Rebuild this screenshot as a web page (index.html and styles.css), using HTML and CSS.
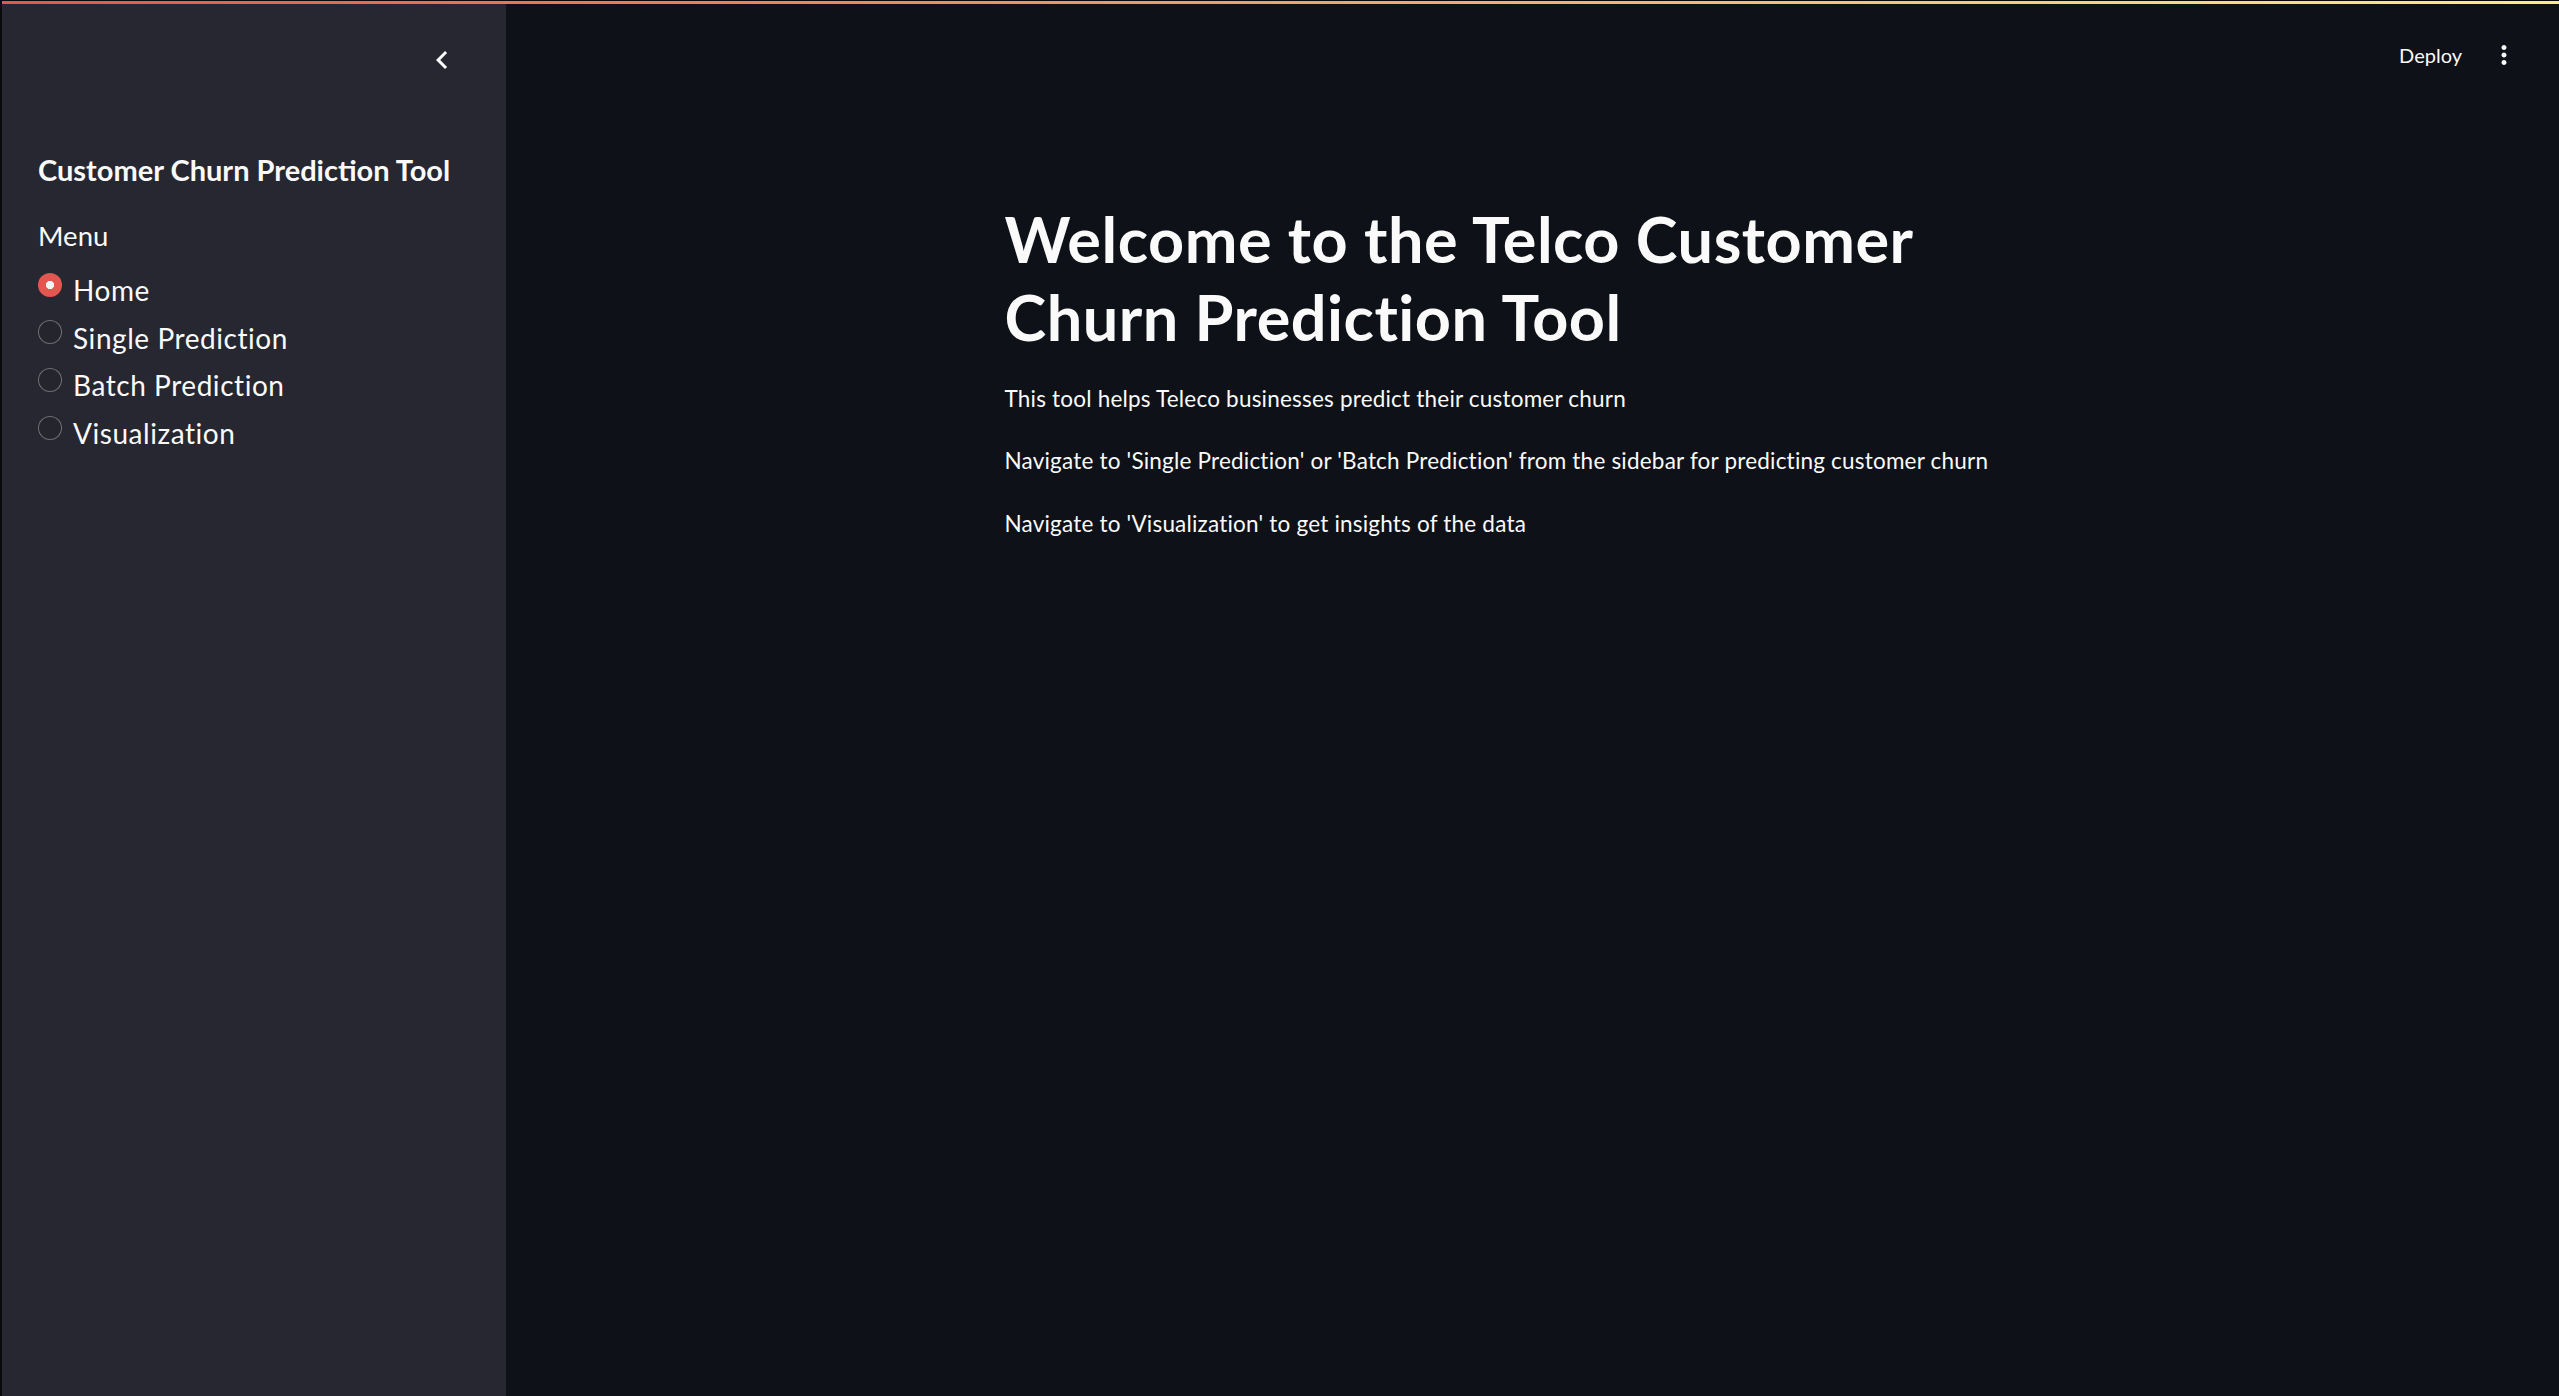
FILE: index.html
```html
<!DOCTYPE html>
<html lang="en">
<head>
<meta charset="utf-8">
<title>Customer Churn Prediction Tool</title>
<link rel="stylesheet" href="styles.css">
</head>
<body>
  <div class="decoration"></div>
  <div class="app">
    <aside class="sidebar">
      <div class="sb-top">
        <svg class="chevron" viewBox="0 0 24 24" width="36" height="36"><path d="M15.41 7.41L14 6l-6 6 6 6 1.41-1.41L10.83 12z" fill="#fafafa"/></svg>
      </div>
      <h2 class="sb-title">Customer Churn Prediction Tool</h2>
      <div class="menu-label">Menu</div>
      <div class="radio-group">
        <div class="radio-row"><span class="radio radio-on"></span><span class="radio-text">Home</span></div>
        <div class="radio-row"><span class="radio"></span><span class="radio-text">Single Prediction</span></div>
        <div class="radio-row"><span class="radio"></span><span class="radio-text">Batch Prediction</span></div>
        <div class="radio-row"><span class="radio"></span><span class="radio-text">Visualization</span></div>
      </div>
    </aside>
    <main class="main">
      <header class="header">
        <span class="deploy">Deploy</span>
        <span class="kebab"><svg viewBox="0 0 24 24" width="30" height="30"><path d="M12 8c1.1 0 2-.9 2-2s-.9-2-2-2-2 .9-2 2 .9 2 2 2zm0 2c-1.1 0-2 .9-2 2s.9 2 2 2 2-.9 2-2-.9-2-2-2zm0 6c-1.1 0-2 .9-2 2s.9 2 2 2 2-.9 2-2-.9-2-2-2z" fill="#fafafa"/></svg></span>
      </header>
      <section class="block">
        <h1 class="title">Welcome to the Telco Customer Churn Prediction Tool</h1>
        <p class="para">This tool helps Teleco businesses predict their customer churn</p>
        <p class="para">Navigate to 'Single Prediction' or 'Batch Prediction' from the sidebar for predicting customer churn</p>
        <p class="para">Navigate to 'Visualization' to get insights of the data</p>
      </section>
    </main>
  </div>
</body>
</html>
```

FILE: styles.css
```css
* { box-sizing: border-box; }
html, body { margin: 0; height: 100%; }
body {
  background: #0a0a0c;
  padding: 1px 0 0 2px;
  display: flex;
  flex-direction: column;
  font-family: Lato, "Noto Sans", sans-serif;
  color: #fafafa;
  overflow: hidden;
}
.decoration {
  height: 3px;
  flex: none;
  background: linear-gradient(90deg, #e2574f, #f6f08a);
}
.app {
  flex: 1;
  display: flex;
  min-height: 0;
}
.sidebar {
  width: 504px;
  flex: none;
  background: #262730;
  padding: 0 0 0 36px;
}
.sb-top {
  height: 146px;
  padding: 38px 46px 0 0;
  display: flex;
  justify-content: flex-end;
  align-items: flex-start;
}
.chevron { display: block; }
.sb-title {
  margin: 0 0 26px;
  font-size: 29px;
  line-height: 40px;
  font-weight: 700;
}
.menu-label {
  font-size: 27.5px;
  line-height: 40px;
  margin-bottom: 11px;
}
.radio-row {
  display: flex;
  align-items: flex-start;
  height: 47.7px;
}
.radio {
  flex: none;
  width: 24px;
  height: 24px;
  border-radius: 50%;
  margin-top: 5.5px;
  margin-right: 11px;
  border: 1.5px solid rgba(250, 250, 250, 0.35);
  background: #24252d;
}
.radio-on {
  border: none;
  background: radial-gradient(circle, #f4f4f6 0 3.9px, #e2574f 4.4px);
}
.radio-text {
  font-size: 28px;
  letter-spacing: 0.55px;
  line-height: 47.7px;
}
.main {
  flex: 1;
  background: #0e1117;
  display: flex;
  flex-direction: column;
}
.header {
  height: 101px;
  flex: none;
  display: flex;
  justify-content: flex-end;
  align-items: center;
  padding-right: 35px;
}
.deploy {
  font-size: 20px;
  line-height: 30px;
  margin-right: 22px;
}
.kebab {
  width: 40px;
  height: 40px;
  display: flex;
  align-items: center;
  justify-content: center;
}
.kebab svg { display: block; }
.block {
  width: 100%;
  max-width: 1104px;
  margin: 0 auto;
  padding: 95px 24px 0;
}
.title {
  margin: 0 0 24px;
  font-size: 63px;
  letter-spacing: 0.5px;
  line-height: 78px;
  font-weight: 700;
}
.para {
  margin: 0 0 24px;
  font-size: 22.5px;
  letter-spacing: 0.2px;
  line-height: 38.4px;
}
```
